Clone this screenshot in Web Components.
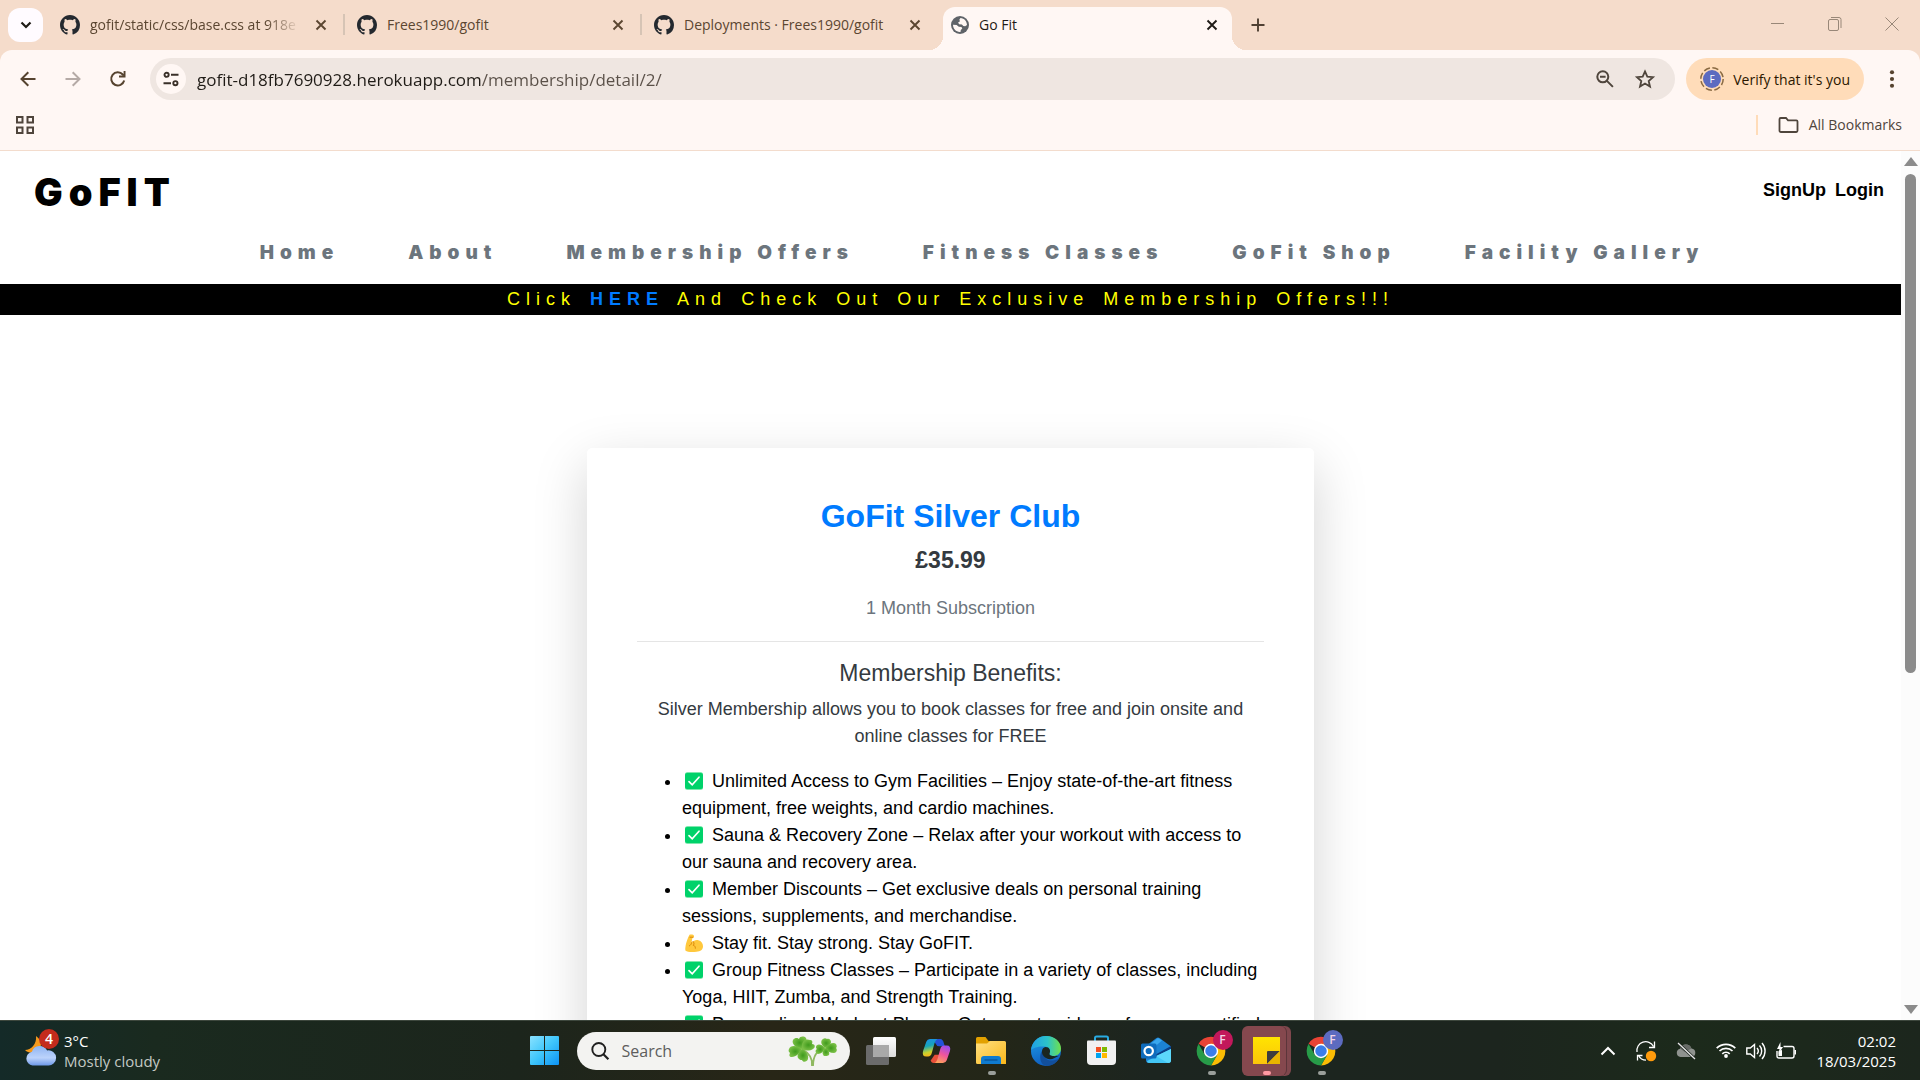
<!DOCTYPE html>
<html lang="en">
<head>
<meta charset="utf-8">
<title>Go Fit</title>
<style>
html, body { margin: 0; height: 100%; }
body { display: flex; flex-direction: column; height: 100vh; overflow: hidden; background: #fff; font-family: "Open Sans", "Noto Sans", sans-serif; font-size: 14px; }
</style>
</head>
<body>
<browser-chrome></browser-chrome>
<page-viewport>
  <site-header></site-header>
  <offer-banner></offer-banner>
  <membership-card heading="GoFit Silver Club" price="£35.99" term="1 Month Subscription">
    <span slot="summary">Silver Membership allows you to book classes for free and join onsite and online classes for FREE</span>
    <benefit-item icon="check">Unlimited Access to Gym Facilities – Enjoy state-of-the-art fitness equipment, free weights, and cardio machines.</benefit-item>
    <benefit-item icon="check">Sauna &amp; Recovery Zone – Relax after your workout with access to our sauna and recovery area.</benefit-item>
    <benefit-item icon="check">Member Discounts – Get exclusive deals on personal training sessions, supplements, and merchandise.</benefit-item>
    <benefit-item icon="arm">Stay fit. Stay strong. Stay GoFIT.</benefit-item>
    <benefit-item icon="check">Group Fitness Classes – Participate in a variety of classes, including Yoga, HIIT, Zumba, and Strength Training.</benefit-item>
    <benefit-item icon="check">Personalized Workout Plans – Get expert guidance from our certified trainers.</benefit-item>
  </membership-card>
</page-viewport>
<task-bar></task-bar>

<script>
const ICONS = {
  github: '<svg viewBox="0 0 16 16"><path fill="#24292f" d="M8 0C3.58 0 0 3.58 0 8c0 3.54 2.29 6.53 5.47 7.59.4.07.55-.17.55-.38 0-.19-.01-.82-.01-1.49-2.01.37-2.53-.49-2.69-.94-.09-.23-.48-.94-.82-1.13-.28-.15-.68-.52-.01-.53.63-.01 1.08.58 1.23.82.72 1.21 1.87.87 2.33.66.07-.52.28-.87.51-1.07-1.78-.2-3.64-.89-3.64-3.95 0-.87.31-1.59.82-2.15-.08-.2-.36-1.02.08-2.12 0 0 .67-.21 2.2.82.64-.18 1.32-.27 2-.27s1.36.09 2 .27c1.53-1.04 2.2-.82 2.2-.82.44 1.1.16 1.92.08 2.12.51.56.82 1.27.82 2.15 0 3.07-1.87 3.75-3.65 3.95.29.25.54.73.54 1.48 0 1.07-.01 1.93-.01 2.2 0 .21.15.46.55.38A8.01 8.01 0 0 0 16 8c0-4.42-3.58-8-8-8z"/></svg>',
  globe: '<svg viewBox="0 0 18 18"><circle cx="9" cy="9" r="9" fill="#5f6368"/><path d="M9.500 2c3.800.3 6.500 3.300 6.500 7l-1.800 1.200-1.900-.3-1.400-1.500-2.800-.2-1-1.700L9 5.300l-.7-1.500z" fill="#fff7f4"/><path d="M2 8.800l3.600.3 2.200 1.700 2.700.3.800 1.500-1.500 1.300-.3 2c-4.200.4-7.500-2.700-7.500-7.100z" fill="#fff7f4"/></svg>',
  close: '<svg viewBox="0 0 12 12"><path d="M1.500 1.500l9 9m0-9l-9 9" stroke="currentColor" stroke-width="1.900" fill="none"/></svg>',
  chevron: '<svg viewBox="0 0 12 12"><path d="M1.500 3.500L6 8l4.500-4.500" stroke="currentColor" stroke-width="2.200" fill="none"/></svg>',
  plus: '<svg viewBox="0 0 14 14"><path d="M7 .5v13M.5 7h13" stroke="currentColor" stroke-width="1.900"/></svg>',
  minimize: '<svg viewBox="0 0 14 14"><path d="M0 6.500h13" stroke="currentColor"/></svg>',
  restore: '<svg viewBox="0 0 14 14"><rect x=".5" y="2.500" width="10" height="11" rx="1.500" fill="none" stroke="currentColor"/><path d="M3 .5h8a2 2 0 0 1 2 2V11" fill="none" stroke="currentColor"/></svg>',
  shut: '<svg viewBox="0 0 14 14"><path d="M.5.500l13 13m0-13l-13 13" stroke="currentColor"/></svg>',
  back: '<svg viewBox="0 0 16 16"><path d="M15.500 8H2M8.300 1.200L1.500 8l6.800 6.800" stroke="currentColor" stroke-width="2" fill="none"/></svg>',
  forward: '<svg viewBox="0 0 16 16"><path d="M.5 8H14M7.700 1.200L14.500 8l-6.800 6.800" stroke="currentColor" stroke-width="2" fill="none"/></svg>',
  reload: '<svg viewBox="0 0 16 16"><path d="M14.200 9.500A6.600 6.600 0 1 1 12.800 3.500l1 1.200" stroke="currentColor" stroke-width="2" fill="none"/><path d="M15.500 0v6.500H9l0-1.900h4.600V0z" fill="currentColor"/></svg>',
  tune: '<svg viewBox="0 0 16 16"><g fill="none" stroke="currentColor" stroke-width="1.900"><circle cx="3.600" cy="3.800" r="2.100"/><path d="M8 3.800h7.500M.5 12.200H8"/><circle cx="12.400" cy="12.200" r="2.100"/></g></svg>',
  zoomout: '<svg viewBox="0 0 18 18"><g fill="none" stroke="currentColor" stroke-width="2"><circle cx="6.800" cy="6.800" r="5.500"/><path d="M10.900 10.900l6 6M4 6.800h5.600"/></g></svg>',
  star: '<svg viewBox="0 0 20 20"><path d="M10 2.400l2.300 5.300 5.700.5-4.300 3.800 1.300 5.600-5-3-5 3 1.300-5.600L2 8.200l5.700-.5z" fill="none" stroke="currentColor" stroke-width="1.800"/></svg>',
  dots: '<svg viewBox="0 0 20 20"><g fill="currentColor"><circle cx="10" cy="2.500" r="2.300"/><circle cx="10" cy="10" r="2.300"/><circle cx="10" cy="17.500" r="2.300"/></g></svg>',
  apps: '<svg viewBox="0 0 18 18"><g fill="none" stroke="currentColor" stroke-width="2"><rect x="1" y="1" width="5.500" height="5.500"/><rect x="11.500" y="1" width="5.500" height="5.500"/><rect x="1" y="11.500" width="5.500" height="5.500"/><rect x="11.500" y="11.500" width="5.500" height="5.500"/></g></svg>',
  folder: '<svg viewBox="0 0 20 16"><path d="M1 2.200Q1 1 2.200 1h5.300l2 2.300h8.300Q19 3.300 19 4.500v9.300Q19 15 17.800 15H2.200Q1 15 1 13.800z" fill="none" stroke="currentColor" stroke-width="1.800"/></svg>',
  avatar: '<svg viewBox="0 0 24 24"><circle cx="12" cy="12" r="11.200" fill="none" stroke="#8a6a42" stroke-width="1.500" stroke-dasharray="6.300 2.500"/><circle cx="12" cy="12" r="9" fill="#5c6bc0"/></svg>',
  check: '<svg viewBox="0 0 18 18"><rect width="18" height="18" rx="2.500" fill="#7fe8ae"/><rect y="1" width="18" height="16" rx="2" fill="#00d26a"/><path d="M4 9.600l3.200 3.200L14 5.200" fill="none" stroke="#fff" stroke-width="1.700" stroke-linecap="round"/></svg>',
  arm: '<svg viewBox="0 0 18 18"><path d="M4.500.8C6 .2 8.800.5 9 2c.2 1.500-1 2-1.800 2.400L6.600 8.700C8.500 6.500 11 5.600 13.300 6.200c3 .8 4.700 3 4.700 6 0 3.400-2.400 5.200-6.500 5.500-4 .3-9.300.4-10.900-1C-.2 15.900.5 8 4.500.8z" fill="#ffc83d"/><path d="M5 3.200h3M6.600 8.700c-.2 1.600-1.300 2.700-2.100 3.100M8 7.400c1.300 1 1.300 3 .2 3.800 1.500.3 2.300 1.800 2.200 3" fill="none" stroke="#d67d00" stroke-width=".9" stroke-linecap="round"/></svg>',
  weather: '<svg viewBox="0 0 30 30"><defs><linearGradient id="c" x2="0" y2="1"><stop stop-color="#8fb4f2"/><stop offset=".6" stop-color="#bcd3fb"/><stop offset="1" stop-color="#6d98e8"/></linearGradient></defs><path d="M11 0c6 4 7 11 1 15-4 2.600-9 2-12-1 6 0 12-6 11-14z" fill="#f59a1c"/><path d="M7.500 29.500a7 7 0 0 1-.6-13.800 8.300 8.300 0 0 1 15.200-1.200A7.600 7.600 0 1 1 22.500 29.500z" fill="url(#c)"/></svg>',
  start: '<svg viewBox="0 0 29 29"><defs><linearGradient id="w" x2="1" y2="1"><stop stop-color="#8ae2ff"/><stop offset=".5" stop-color="#3fc6fb"/><stop offset="1" stop-color="#0d93f5"/></linearGradient></defs><path fill="url(#w)" d="M1 0h13v14H0V1a1 1 0 0 1 1-1zM15 0h13a1 1 0 0 1 1 1v13H15zM0 15h14v14H1a1 1 0 0 1-1-1zM15 15h14v13a1 1 0 0 1-1 1H15z"/></svg>',
  search: '<svg viewBox="0 0 18 18"><g fill="none" stroke="#202020" stroke-width="1.900"><circle cx="7.800" cy="7.500" r="6.500"/><path d="M12.400 12.200l5 5" stroke-width="2.200"/></g></svg>',
  clover: '<svg viewBox="0 0 50 30"><defs><radialGradient id="g"><stop stop-color="#3f9a1c"/><stop offset="1" stop-color="#79bf45"/></radialGradient></defs><path d="M14 13C21 17 25 22 24 30M37 12c-8 2-12 8-12 18" fill="none" stroke="#8fb860" stroke-width="1.800"/><g fill="url(#g)"><path d="M14 13C9 13 3 8 5 4c2-3 5-2 6-1 1-3 5-3 7-1 2 4-1 9-4 11z"/><path d="M14 13c-1-7 3-11 8-9 2 0 3 1 2 4 3 0 4 3 1 5-3 2-8 2-11 0z"/><path d="M14 13c-5-4-12-4-13 0-1 2 0 3 1 4-1 2-1 4 2 4 4 0 8-4 10-8z"/><path d="M14 13c-4 3-6 8-3 10 1 1 2 1 3 1 1 3 5 2 6-1 1-4-2-8-6-10z"/><path d="M37 12c-4-3-5-7-2-9 1-1 3-1 4 0 2-1 4 1 4 3 0 3-4 5-6 6z"/><path d="M37 12c4-5 9-6 11-4 1 2 1 3 0 4 2 2 0 5-2 5-4 0-7-2-9-5z"/><path d="M37 12c-4-5-9-4-9-1 0 1 0 1 1 2-2 1-2 4 1 5 3 0 6-3 7-6z"/><path d="M37 12c-3 3-3 6-1 8 2 0 4 0 5-1 1-3-1-6-4-7z"/></g></svg>',
  taskview: '<svg viewBox="0 0 30 28"><defs><linearGradient id="t" x2="0" y2="1"><stop stop-color="#fff"/><stop offset="1" stop-color="#dcdcdc"/></linearGradient></defs><rect y="8" width="23" height="20" rx="1.500" fill="#6b6b6b"/><rect x="7" width="23" height="20" rx="1.500" fill="url(#t)"/><path d="M7 8h16v12H8.500L7 18.500z" fill="#a9a9a9"/></svg>',
  copilot: '<svg viewBox="0 0 30 28"><defs><linearGradient id="a" x2=".2" y2="1"><stop stop-color="#1d8cf0"/><stop offset=".45" stop-color="#17a5b8"/><stop offset=".8" stop-color="#c9d32f"/><stop offset="1" stop-color="#f5b61a"/></linearGradient><linearGradient id="b" x1=".7" x2=".3" y2="1"><stop stop-color="#9a4df0"/><stop offset=".5" stop-color="#f0559c"/><stop offset="1" stop-color="#ffa25a"/></linearGradient></defs><path d="M12 27h4l3-9h-6l-4 6q0 3 3 3z" fill="#e8503a"/><path d="M9 1h10q3 0 4 5l1 3h-6q-3 0-4-3z" fill="#2452d9"/><path d="M8 1h8q-2 1-3 4l-3 11q-1 4-4 4H4q-5 0-3.500-6L4 4q1-3 4-3z" fill="url(#a)"/><path d="M22 27h-9q2-1 3-4l3-11q1-4 4-4h3q5 0 3.500 6L26 24q-1 3-4 3z" fill="url(#b)"/></svg>',
  explorer: '<svg viewBox="0 0 30 27"><defs><linearGradient id="e" x2="1" y2="1"><stop stop-color="#ffe082"/><stop offset="1" stop-color="#fbb81a"/></linearGradient></defs><path d="M0 1.500Q0 0 1.500 0h8l3 4H28v8H0z" fill="#e2a100"/><path d="M0 6.500h11l3-2.500h14.500Q30 4 30 5.500V27H1.500Q0 27 0 25.500z" fill="url(#e)"/><path d="M5 27v-5q0-3 3-3h14q3 0 3 3v5z" fill="#0f7bd0"/><path d="M8.500 23h13" stroke="#0a4f90" stroke-width="1.200"/></svg>',
  edge: '<svg viewBox="0 0 30 30"><defs><linearGradient id="p" x2="1"><stop stop-color="#1f9fe8"/><stop offset=".55" stop-color="#2cc3c9"/><stop offset="1" stop-color="#6fe04c"/></linearGradient><linearGradient id="q" x2=".3" y2="1"><stop stop-color="#1f9fe8"/><stop offset="1" stop-color="#0f5fc0"/></linearGradient></defs><circle cx="15" cy="15" r="15" fill="url(#q)"/><path d="M11 15c2 9 8 12 17 7.500C25.500 27 21 30 15.500 30 9 29 7.500 20 11 15z" fill="#124f9c"/><path d="M0 14C1 6 7 0 15 0c9 0 15 6 15 12.500 0 5-4 7.500-8 7.500-3 0-4.500-1-3.500-2.500 1.500-3 0-7-5-7C7 10 2 12 0 14z" fill="url(#p)"/><path d="M18.500 17.500c1.500-3 0-6.500-4-6.500-4 .5-4.500 6-2 9 2 3 7 4.500 11 2l5-2.500c-2 .8-10.500 1.500-10-2z" fill="#1b2620"/></svg>',
  store: '<svg viewBox="0 0 29 29"><path d="M8 6V2q0-1.500 1.500-1.500h10Q21 .5 21 2v4" fill="none" stroke="#29abe2" stroke-width="2"/><path d="M1 4.500h27q1 0 1 1V25q0 4-4 4H4q-4 0-4-4V5.500q0-1 1-1z" fill="#f1f1f1"/><path d="M9 11h5v5H9z" fill="#f25022"/><path d="M15 11h5v5h-5z" fill="#7fba00"/><path d="M9 17h5v5H9z" fill="#00a4ef"/><path d="M15 17h5v5h-5z" fill="#ffb900"/></svg>',
  outlook: '<svg viewBox="0 0 30 27"><path d="M5 9L15.500 1q1.500-1 3 0L30 9.500V23q0 3-3 3H8q-3 0-3-3z" fill="#1c83d4"/><path d="M8 8l9-7 4 2.500L10 13z" fill="#3aa7ee"/><path d="M12 19L30 9v3L15 23z" fill="#0b3f86"/><path d="M6 24l24-12v11q0 3-3 3H8q-2 0-2-2z" fill="#43c6f5"/><path d="M30 12v11q0 3-3 3L15 19z" fill="#5cd8fb"/><rect y="6.500" width="15.500" height="15" rx="1.500" fill="#0f6cbd"/><circle cx="7.700" cy="14" r="4.200" fill="none" stroke="#fff" stroke-width="2.200"/></svg>',
  chrome: '<svg viewBox="0 0 48 48"><path d="M24 24L4.100 12.500A23 23 0 0 1 43.900 12.500L44 13H24z" fill="#ea4335"/><path d="M24 12.500H43.900A23 23 0 0 1 24 47L34 29.800z" fill="#fbbc04"/><path d="M4.100 12.500L14 29.800 24 35.500l10-5.700L24 47A23 23 0 0 1 4.100 12.500z" fill="#279b48"/><circle cx="24" cy="24" r="11.500" fill="#fff"/><circle cx="24" cy="24" r="9.200" fill="#3b7de8"/></svg>',
  sticky: '<svg viewBox="0 0 27 27"><defs><linearGradient id="s" x2="0" y2="1"><stop stop-color="#ffe400"/><stop offset="1" stop-color="#fbc50b"/></linearGradient></defs><path d="M0 0h27v27H0z" fill="url(#s)"/><path d="M14 27V15q0-1 1-1h12z" fill="#3d3d3d"/><path d="M27 14v13H14z" fill="#e8b400"/></svg>',
  caret: '<svg viewBox="0 0 16 10"><path d="M1.500 8.500L8 2l6.500 6.500" fill="none" stroke="#fff" stroke-width="2"/></svg>',
  sync: '<svg viewBox="0 0 20 20"><path d="M1 11A8.800 8.800 0 0 1 17.500 5.500M18.500.5v6h-5.500M10 19.200A8.800 8.800 0 0 1 2.500 14.500M1.500 19.500v-5h5" fill="none" stroke="#fff" stroke-width="1.300"/><circle cx="15" cy="15" r="5.200" fill="#ff9a0c"/></svg>',
  cloud: '<svg viewBox="0 0 20 16"><path d="M4.500 14a4.200 4.200 0 0 1-.3-8.300A6 6 0 0 1 15.500 5.500 4.300 4.300 0 0 1 15.800 14z" fill="#8f938f"/><path d="M4.200 5.700A6 6 0 0 1 15.500 5.500L9 9z" fill="#686c68"/><path d="M2 0l17 16" stroke="#1c261e" stroke-width="3"/><path d="M2 0l17 16" stroke="#e8e8e8" stroke-width="1.300"/></svg>',
  wifi: '<svg viewBox="0 0 20 16"><g fill="none" stroke="#fff" stroke-width="1.700"><path d="M.7 6.200a13.200 13.200 0 0 1 18.600 0M3.500 9a9.200 9.200 0 0 1 13 0M6.300 11.800a5.200 5.200 0 0 1 7.400 0"/></g><circle cx="10" cy="14" r="1.900" fill="#fff"/></svg>',
  sound: '<svg viewBox="0 0 20 18"><g fill="none" stroke="#fff" stroke-width="1.400"><path d="M.8 6v6h3.500L8.500 15.500v-13L4.300 6z"/><path d="M11 6a4.500 4.500 0 0 1 0 6M13.500 3.500a8 8 0 0 1 0 11M16 1a12 12 0 0 1 0 16"/></g></svg>',
  battery: '<svg viewBox="0 0 20 18"><path d="M7.500 4.500H16q2 0 2 2V14q0 2-2 2H3q-2 0-2-2V9" fill="none" stroke="#fff" stroke-width="1.400"/><path d="M18.500 8h1.500v4.500h-1.500z" fill="#fff"/><path d="M4.500 0L1 7h2.500L2.500 12 7 5H4.500z" fill="#fff"/><path d="M2.500 9v5h3.500V8z" fill="#fff"/></svg>'
};

/* Registers an element whose shadow root is cloned from a template. */
function element(name, render) {
  customElements.define(name, class extends HTMLElement {
    connectedCallback() {
      if (this.shadowRoot) return;
      const t = document.createElement('template');
      t.innerHTML = render(this);
      this.attachShadow({ mode: 'open' }).append(t.content.cloneNode(true));
    }
  });
}
const attr = (el, n) => el.getAttribute(n) || '';
const RESET = `:host,*{box-sizing:border-box} button,input{font:inherit;color:inherit;border:0;padding:0;margin:0;background:none;outline:0} a{text-decoration:none;color:inherit}`;

element('ui-icon', el => `<style>
  :host{display:inline-flex;flex:none;width:var(--w,16px);height:var(--h,var(--w,16px))}
  svg{width:100%;height:100%;display:block;overflow:visible}
  </style>${ICONS[attr(el, 'name')] || ''}`);

element('browser-tab', el => `<style>${RESET}
  :host{display:flex;align-items:center;position:relative;width:297px;height:50px;padding:0 11px 0 13px;color:#5b4631}
  :host([separated])::after{content:"";position:absolute;right:-1px;top:14px;width:2px;height:21px;background:#d6c4b5}
  :host([active]){color:#1f1b16}
  .shape{display:none}
  :host([active]) .shape{display:block;position:absolute;inset:7px 3px 0 5px;background:#fff7f4;border-radius:12px 12px 0 0}
  .shape::before,.shape::after{content:"";position:absolute;bottom:0;width:14px;height:14px}
  .shape::before{right:100%;background:radial-gradient(circle at 0 0,transparent 14px,#fff7f4 14px)}
  .shape::after{left:100%;background:radial-gradient(circle at 100% 0,transparent 14px,#fff7f4 14px)}
  ui-icon{position:relative}
  .title{position:relative;flex:1;margin:0 9px 0 10px;overflow:hidden;white-space:nowrap;line-height:20px}
  :host([fade]) .title{-webkit-mask-image:linear-gradient(90deg,#000 84%,transparent)}
  button{position:relative;width:24px;height:24px;display:grid;place-items:center}
  </style><div class="shape"></div>
  <ui-icon name="${attr(el, 'icon')}" style="--w:${attr(el, 'icon') === 'globe' ? 18 : 20}px"></ui-icon>
  <span class="title"><slot></slot></span>
  <button aria-label="Close tab"><ui-icon name="close" style="--w:12px"></ui-icon></button>`);

element('browser-chrome', () => `<style>${RESET}
  :host{display:block;flex:none;background:#fff7f4;border-bottom:1px solid #f3dccd;color:#4f453c}
  .strip{display:flex;height:50px;background:#f5dccb;padding-left:8px}
  .list{width:35px;height:34px;margin:8px 4px 0 0;border-radius:12px;background:#fffbff;color:#1f1b16;display:grid;place-items:center}
  .new{width:30px;height:34px;margin:8px 0 0 8px;display:grid;place-items:center;color:#4f4033}
  .window{margin-left:auto;display:flex;color:#988778}
  .window button{width:57px;height:48px;display:grid;place-items:center}
  .toolbar{display:flex;align-items:center;padding:8px 13px 8px 5px;background:#fff7f4;border-radius:12px 12px 0 0}
  .nav{display:flex;margin-right:10px;color:#56432f}
  .nav button{width:45px;height:42px;display:grid;place-items:center}
  .nav button:nth-child(2){color:#b5aaa6}
  .omni{flex:1;display:flex;align-items:center;height:42px;border-radius:21px;background:#efe6e1;padding:0 19px 0 6px}
  .site{width:30px;height:30px;border-radius:50%;background:#fff7f4;display:grid;place-items:center;color:#3a3029;margin-right:11px}
  .omni input{flex:1;min-width:0;height:30px;font-size:17px;-webkit-text-fill-color:transparent;background:linear-gradient(90deg,#1f1b16 284px,#5a5048 284px);-webkit-background-clip:text;background-clip:text}
  .omni .act{width:22px;height:30px;display:grid;place-items:center;margin-left:18px}
  .chip{display:flex;align-items:center;justify-content:space-between;width:178px;height:42px;border-radius:21px;background:#ffdcb9;margin:0 13px 0 11px;padding:0 14px;color:#2b1700;font-size:14px}
  .face{position:relative;display:grid;place-items:center;width:24px;height:24px}
  .face b{position:absolute;font-weight:400;font-size:10px;color:#fff}
  .more{width:30px;height:42px;display:grid;place-items:center;color:#56432f}
  .marks{display:flex;align-items:center;justify-content:space-between;height:42px;padding:0 18px 8px 16px}
  .marks button{display:flex;align-items:center;gap:10px;line-height:20px}
  .all{display:flex;align-items:center}
  .all i{width:2px;height:20px;background:#ffdcb9;margin-right:20px}
  .corner{background:#f5dccb}
  </style>
  <div class="strip">
    <button class="list" aria-label="Search tabs"><ui-icon name="chevron" style="--w:12px"></ui-icon></button>
    <browser-tab icon="github" separated fade>gofit/static/css/base.css at 918e</browser-tab>
    <browser-tab icon="github" separated>Frees1990/gofit</browser-tab>
    <browser-tab icon="github">Deployments · Frees1990/gofit</browser-tab>
    <browser-tab icon="globe" active>Go Fit</browser-tab>
    <button class="new" aria-label="New tab"><ui-icon name="plus" style="--w:14px"></ui-icon></button>
    <div class="window">
      <button aria-label="Minimize"><ui-icon name="minimize" style="--w:14px"></ui-icon></button>
      <button aria-label="Restore"><ui-icon name="restore" style="--w:14px"></ui-icon></button>
      <button aria-label="Close"><ui-icon name="shut" style="--w:14px"></ui-icon></button>
    </div>
  </div>
  <div class="corner"><div class="toolbar">
    <div class="nav">
      <button aria-label="Back"><ui-icon name="back"></ui-icon></button>
      <button aria-label="Forward"><ui-icon name="forward"></ui-icon></button>
      <button aria-label="Reload"><ui-icon name="reload"></ui-icon></button>
    </div>
    <div class="omni">
      <button class="site" aria-label="Site information"><ui-icon name="tune"></ui-icon></button>
      <input aria-label="Address" value="gofit-d18fb7690928.herokuapp.com/membership/detail/2/">
      <button class="act" aria-label="Zoom"><ui-icon name="zoomout" style="--w:18px"></ui-icon></button>
      <button class="act" aria-label="Bookmark"><ui-icon name="star" style="--w:20px"></ui-icon></button>
    </div>
    <button class="chip"><span class="face"><ui-icon name="avatar" style="--w:24px"></ui-icon><b>F</b></span>Verify that it's you</button>
    <button class="more" aria-label="Menu"><ui-icon name="dots" style="--w:18px"></ui-icon></button>
  </div></div>
  <div class="marks">
    <button aria-label="Apps"><ui-icon name="apps" style="--w:18px"></ui-icon></button>
    <div class="all"><i></i><button><ui-icon name="folder" style="--w:21px;--h:16px"></ui-icon>All Bookmarks</button></div>
  </div>`);

element('page-viewport', () => `<style>
  :host{display:flex;flex:1;min-height:0;overflow:hidden;background:#fff;font-family:"Liberation Sans",Arial,sans-serif;font-size:18px;line-height:27px;color:#000}
  main{flex:1;min-width:0;overflow:hidden}
  .bar{width:19px;display:flex;flex-direction:column;align-items:center;background:#fcfcfc;padding:6px 0;box-sizing:border-box}
  .up,.down{width:0;height:0;border:7px solid transparent}
  .up{border-top:0;border-bottom:9px solid #8b8b8b}
  .down{border-bottom:0;border-top:9px solid #8b8b8b}
  .track{flex:1;width:11px;padding-top:8px}
  .thumb{height:60%;border-radius:6px;background:#8b8b8b}
  </style><main><slot></slot></main>
  <div class="bar"><div class="up"></div><div class="track"><div class="thumb"></div></div><div class="down"></div></div>`);

element('site-header', () => `<style>${RESET}
  :host{display:block;padding:14px 0 18px}
  .top{display:flex;justify-content:space-between;align-items:flex-start;padding:0 17px 0 34px}
  .brand{font:900 38px/54px Inter,"Liberation Sans",sans-serif;letter-spacing:6px}
  .account{display:flex;gap:9px;padding-top:12px;font-weight:700}
  nav{display:flex;justify-content:center;gap:69px;padding:20px 0 0 63px;font:900 19px/27px Inter,"Liberation Sans",sans-serif;letter-spacing:6px;color:#6c757d;white-space:nowrap}
  </style>
  <div class="top"><a class="brand" href="#">GoFIT</a><div class="account"><a href="#">SignUp</a><a href="#">Login</a></div></div>
  <nav><a href="#">Home</a><a href="#">About</a><a href="#">Membership Offers</a><a href="#">Fitness Classes</a><a href="#">GoFit Shop</a><a href="#">Facility Gallery</a></nav>`);

element('offer-banner', () => `<style>${RESET}
  :host{display:block;background:#000;color:#ff0;text-align:center;line-height:31px;letter-spacing:6px;word-spacing:3px}
  a{color:#007bff;font-weight:700}
  </style>Click <a href="#">HERE</a> And Check Out Our Exclusive Membership Offers!!!`);

element('benefit-item', el => `<style>
  :host{display:list-item;list-style:disc}
  ui-icon{--w:18px;margin:0 4px 0 3px;vertical-align:-3px}
  </style><ui-icon name="${attr(el, 'icon')}"></ui-icon> <slot></slot>`);

element('membership-card', el => `<style>
  :host{display:block;max-width:627px;margin:133px auto 0;padding:50px;border-radius:5px;background:#fff;box-shadow:0 18px 54px rgba(0,0,0,.175)}
  header,section{text-align:center}
  h2,h3,p{margin:0}
  h2{font-size:32px;line-height:36px;color:#007bff;margin-bottom:9px}
  .price{font-size:23px;line-height:34px;font-weight:700;color:#343a40;margin-bottom:18px}
  .term{color:#6c757d}
  hr{border:0;border-top:1px solid #e5e5e5;margin:19px 0 18px}
  h3{font-weight:400;font-size:23px;line-height:27px;color:#343a40;margin-bottom:9px}
  .sum{color:#343a40;margin-bottom:18px}
  .list{padding-left:45px}
  </style>
  <header><h2>${attr(el, 'heading')}</h2><p class="price">${attr(el, 'price')}</p><p class="term">${attr(el, 'term')}</p></header>
  <hr><section><h3>Membership Benefits:</h3><p class="sum"><slot name="summary"></slot></p></section>
  <div class="list" role="list"><slot></slot></div>`);

element('task-button', el => `<style>${RESET}
  :host{display:block}
  button{width:55px;height:50px;display:grid;place-items:center;position:relative;isolation:isolate}
  :host([running]) button::after{content:"";position:absolute;left:24px;bottom:1px;width:8px;height:4px;border-radius:2px;background:#9a9f9b}
  .stack{display:none}
  :host([current]) .stack{display:block;position:absolute;inset:0 3px 0 30px;border-radius:6px;background:#7f474d}
  :host([current]) button::before{content:"";position:absolute;z-index:1;inset:0 8px 0 3px;border-radius:6px;background:#85484e;box-shadow:1px 0 0 #5c353a}
  :host([current]) button::after{z-index:2;background:#ff9aa2}
  ui-icon{position:relative;z-index:2}
  .badge{position:absolute;z-index:3;left:29px;top:4px;width:20px;height:20px;border-radius:50%;background:var(--badge);color:#f3d5e6;font-size:12px;line-height:20px;text-align:center;font-weight:600}
  </style><button aria-label="${attr(el, 'label')}"><span class="stack"></span><ui-icon name="${attr(el, 'icon')}" style="--w:${attr(el, 'w') || 30}px;--h:${attr(el, 'h') || attr(el, 'w') || 30}px"></ui-icon>${attr(el, 'badge') ? `<span class="badge">${attr(el, 'badge')}</span>` : ''}</button>`);

element('task-bar', () => `<style>${RESET}
  :host{display:grid;grid-template-columns:1fr auto 1fr;align-items:center;flex:none;height:60px;border-top:1px solid #3d473d;color:#fff;font-size:15px;line-height:20px;background:linear-gradient(90deg,#142a28,#1a2a1f 8%,#1c251c 27%,#282617 40%,#232618 52%,#1c2520 60%,#1c251e 78%,#1c2a1b 88%,#1c261d)}
  .weather{display:flex;align-items:center;gap:9px;padding-left:25px;text-align:left}
  .pic{position:relative;display:flex}
  .count{position:absolute;left:14px;top:-7px;width:20px;height:20px;border-radius:50%;background:#c42b1c;text-align:center;font-size:14px;font-weight:600}
  .weather small{display:block;font-size:15px}
  .weather small+small{color:#c3c9c4}
  .apps{display:flex;align-items:center;padding-right:55px}
  .search{display:flex;align-items:center;width:273px;height:38px;border-radius:19px;background:#f3f3f1;margin:0 4px 0 5px;padding:0 12px 0 14px}
  .search input{flex:1;min-width:0;margin-left:13px;font-size:16px;color:#5d5d5d}
  .search input::placeholder{color:#5d5d5d;opacity:1}
  .tray{display:flex;align-items:center;justify-content:flex-end;padding-right:24px}
  .tray>button{display:flex;margin-right:20px}
  .tray .quick{gap:10px}
  .clock{text-align:right}
  </style>
  <button class="weather"><span class="pic"><ui-icon name="weather" style="--w:30px"></ui-icon><span class="count">4</span></span><span><small>3°C</small><small>Mostly cloudy</small></span></button>
  <div class="apps">
    <task-button icon="start" w="29" label="Start"></task-button>
    <label class="search"><ui-icon name="search" style="--w:18px"></ui-icon><input type="text" placeholder="Search" aria-label="Search"><ui-icon name="clover" style="--w:50px;--h:30px"></ui-icon></label>
    <task-button icon="taskview" w="30" h="28" label="Task view"></task-button>
    <task-button icon="copilot" w="29" h="26" label="Copilot"></task-button>
    <task-button icon="explorer" w="30" h="27" label="File Explorer" running></task-button>
    <task-button icon="edge" label="Edge"></task-button>
    <task-button icon="store" w="29" label="Store"></task-button>
    <task-button icon="outlook" w="30" h="27" label="Outlook"></task-button>
    <task-button icon="chrome" label="Chrome" badge="F" running style="--badge:#c2185b"></task-button>
    <task-button icon="sticky" w="27" label="Sticky Notes" running current></task-button>
    <task-button icon="chrome" label="Chrome" badge="F" running style="--badge:#5c6bc0"></task-button>
  </div>
  <div class="tray">
    <button aria-label="Hidden icons"><ui-icon name="caret" style="--w:16px;--h:10px"></ui-icon></button>
    <button aria-label="Update"><ui-icon name="sync" style="--w:20px"></ui-icon></button>
    <button aria-label="OneDrive"><ui-icon name="cloud" style="--w:20px;--h:16px"></ui-icon></button>
    <button class="quick" aria-label="Network, sound, battery"><ui-icon name="wifi" style="--w:20px;--h:16px"></ui-icon><ui-icon name="sound" style="--w:20px;--h:18px"></ui-icon><ui-icon name="battery" style="--w:20px;--h:18px"></ui-icon></button>
    <div class="clock"><div>02:02</div><div>18/03/2025</div></div>
  </div>`);
</script>
</body>
</html>
